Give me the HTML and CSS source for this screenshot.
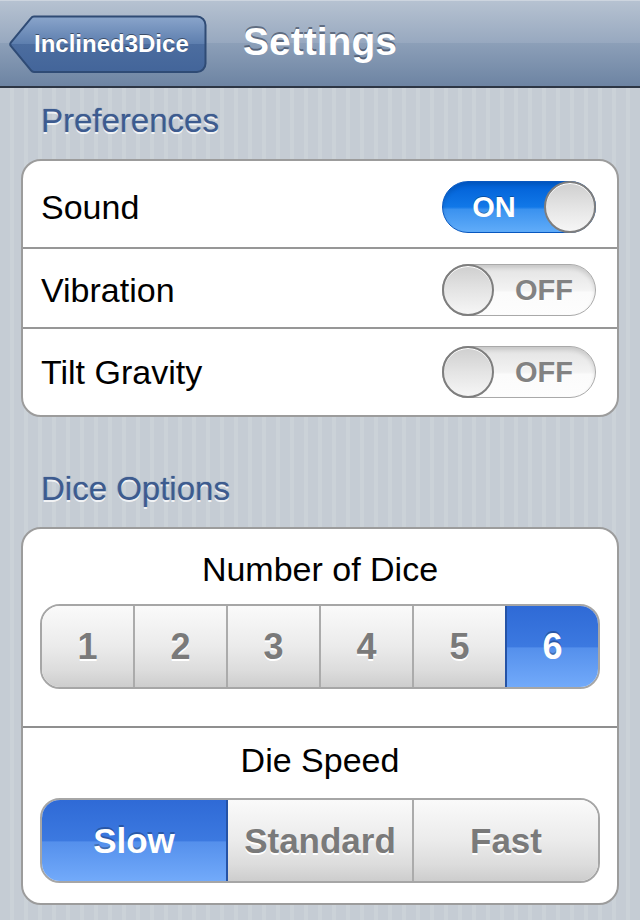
FILE: index.html
```html
<!DOCTYPE html>
<html lang="en">
<head>
  <meta charset="UTF-8" />
  <meta name="viewport" content="width=device-width, initial-scale=1.0"/>
  <title>Settings</title>
  <link rel="stylesheet" href="styles.css">
</head>
<body>

  <div class="nav-bar">
    <div class="back-button">
      <svg class="back-shape" viewBox="0 0 198 59" width="198" height="59">
        <defs>
          <linearGradient id="backFill" x1="0" y1="0" x2="0" y2="1">
            <stop offset="0" stop-color="#8aa5cb"/>
            <stop offset="0.5" stop-color="#5d7eae"/>
            <stop offset="0.5" stop-color="#4c6d9f"/>
            <stop offset="1" stop-color="#43659a"/>
          </linearGradient>
        </defs>
        <path d="M25 1.5 H188 a8.5 8.5 0 0 1 8.5 8.5 V48.5 a8.5 8.5 0 0 1 -8.5 8.5 H25 a4 4 0 0 1 -3 -1.6 L1.8 31 a3 3 0 0 1 0 -3.4 L22 3.1 a4 4 0 0 1 3 -1.6 Z"
              fill="url(#backFill)" stroke="#2f4b75" stroke-width="2"/>
      </svg>
      <span class="back-label">Inclined3Dice</span>
    </div>
    <h1 class="nav-title">Settings</h1>
    <div></div>
  </div>

  <h2 class="group-header header-first">Preferences</h2>
  <div class="group">
    <div class="row row-first">
      <span class="row-label">Sound</span>
      <div class="switch switch-on">
        <span class="switch-text">ON</span>
        <span class="knob"></span>
      </div>
    </div>
    <div class="row row-middle">
      <span class="row-label">Vibration</span>
      <div class="switch">
        <span class="knob"></span>
        <span class="switch-text">OFF</span>
      </div>
    </div>
    <div class="row row-last">
      <span class="row-label">Tilt Gravity</span>
      <div class="switch">
        <span class="knob"></span>
        <span class="switch-text">OFF</span>
      </div>
    </div>
  </div>

  <h2 class="group-header header-second">Dice Options</h2>
  <div class="group">
    <div class="option option-dice">
      <div class="option-title">Number of Dice</div>
      <div class="segmented segmented-dice">
        <div class="segment">1</div>
        <div class="segment">2</div>
        <div class="segment">3</div>
        <div class="segment">4</div>
        <div class="segment">5</div>
        <div class="segment selected">6</div>
      </div>
    </div>
    <div class="option option-speed">
      <div class="option-title option-title-speed">Die Speed</div>
      <div class="segmented segmented-speed">
        <div class="segment selected">Slow</div>
        <div class="segment">Standard</div>
        <div class="segment">Fast</div>
      </div>
    </div>
  </div>

</body>
</html>
```

FILE: styles.css
```css
body {
  font-family: 'Liberation Sans', Arial, sans-serif;
  margin: 0;
  width: 640px;
  height: 920px;
  overflow: hidden;
  background: repeating-linear-gradient(90deg, #c5ccd4 0 10px, #cbd2d8 10px 14px);
}

/* navigation bar */
.nav-bar {
  display: grid;
  grid-template-columns: 1fr auto 1fr;
  align-items: center;
  background: linear-gradient(#b6c2d1, #97a8bf 50%, #8c9fb8 50%, #6d84a3);
  border-top: 1px solid #cdd5df;
  border-bottom: 2px solid #2d3644;
  height: 85px;
}
.back-button {
  position: relative;
  width: 198px;
  height: 59px;
  margin-left: 9px;
  margin-top: 1px;
  display: flex;
  align-items: center;
}
.back-shape {
  position: absolute;
  left: 0;
  top: 0;
}
.back-label {
  position: relative;
  margin-left: 25px;
  color: #fff;
  font-weight: bold;
  font-size: 24px;
  text-shadow: 0 -1px 0 rgba(0, 0, 0, 0.45);
}
.nav-title {
  margin: -4px 0 0;
  color: #fff;
  font-size: 39px;
  font-weight: bold;
  text-shadow: 0 -2px 0 rgba(40, 50, 70, 0.55);
}

/* grouped table */
.group-header {
  margin: 0 0 22px 41px;
  font-size: 33px;
  line-height: 33px;
  font-weight: normal;
  color: #3d5b8f;
  text-shadow: 0 2px 0 rgba(255, 255, 255, 0.8), 0 0 1px #3d5b8f;
}
.header-first {
  margin-top: 16px;
}
.header-second {
  margin-top: 55px;
}
.group {
  margin: 0 21px;
  background: #fff;
  border: 2px solid #9c9c9c;
  border-radius: 20px;
  overflow: hidden;
}
.row {
  display: flex;
  align-items: center;
  justify-content: space-between;
  box-sizing: border-box;
  padding: 0 21px 0 18px;
}
.row + .row {
  border-top: 2px solid #979797;
}
.row-first {
  height: 86px;
  padding-top: 6px;
}
.row-middle {
  height: 80px;
  padding-top: 4px;
}
.row-last {
  height: 88px;
}
.row-label {
  font-size: 34px;
  color: #000;
}

/* switches */
.switch {
  width: 154px;
  height: 52px;
  border-radius: 26px;
  box-sizing: border-box;
  display: flex;
  align-items: center;
  border: 1px solid #a9a9a9;
  background: linear-gradient(#e2e2e2, #f3f3f3 50%, #fbfbfb 55%, #fdfdfd);
  box-shadow: inset 0 3px 4px rgba(0, 0, 0, 0.12);
}
.switch-on {
  border-color: #0857bf;
  background: linear-gradient(#005fd6, #1178e8 50%, #3b92ef 55%, #60acf9);
}
.switch-text {
  flex: 1;
  text-align: center;
  font-size: 29px;
  font-weight: bold;
  color: #828282;
  text-shadow: 0 1px 0 #fff;
}
.switch-on .switch-text {
  color: #fff;
  text-shadow: 0 -1px 0 rgba(0, 0, 0, 0.3);
}
.knob {
  width: 52px;
  height: 52px;
  margin: -1px;
  box-sizing: border-box;
  border-radius: 50%;
  border: 2px solid #7e7e7e;
  background: linear-gradient(#cfcfcf, #e4e4e4 50%, #f6f6f6);
  box-shadow: inset 0 1px 0 #fff;
}

/* dice options */
.option {
  padding: 23px 17px 37px;
}
.option-speed {
  padding: 15px 17px 20px;
  border-top: 2px solid #8f8f8f;
}
.option-title {
  font-size: 34px;
  line-height: 34px;
  text-align: center;
  color: #000;
  margin-bottom: 18px;
}
.option-title-speed {
  margin-bottom: 21px;
}
.segmented {
  display: flex;
  height: 85px;
  box-sizing: border-box;
  border: 2px solid #a6a6a6;
  border-radius: 20px;
  overflow: hidden;
}
.segment {
  flex: 1;
  display: flex;
  align-items: center;
  justify-content: center;
  font-weight: bold;
  font-size: 35px;
  color: #7a7a7a;
  text-shadow: 0 2px 0 #fff;
  background: linear-gradient(#fafafa, #ebebeb 50%, #dcdcdc 80%, #cdcdcd);
}
.segment + .segment {
  border-left: 2px solid #ababab;
}
.segmented-dice .segment {
  font-size: 36px;
}
.segment.selected {
  color: #fff;
  text-shadow: 0 -2px 0 rgba(0, 0, 0, 0.25);
  background: linear-gradient(#2f6ad6, #3c79e0 50%, #5590ec 52%, #72aafa);
  border-left-color: #2553a6;
}
.segmented-speed .segment.selected {
  border-right: 2px solid #2553a6;
}
.segmented-speed .segment.selected + .segment {
  border-left: none;
}
```
